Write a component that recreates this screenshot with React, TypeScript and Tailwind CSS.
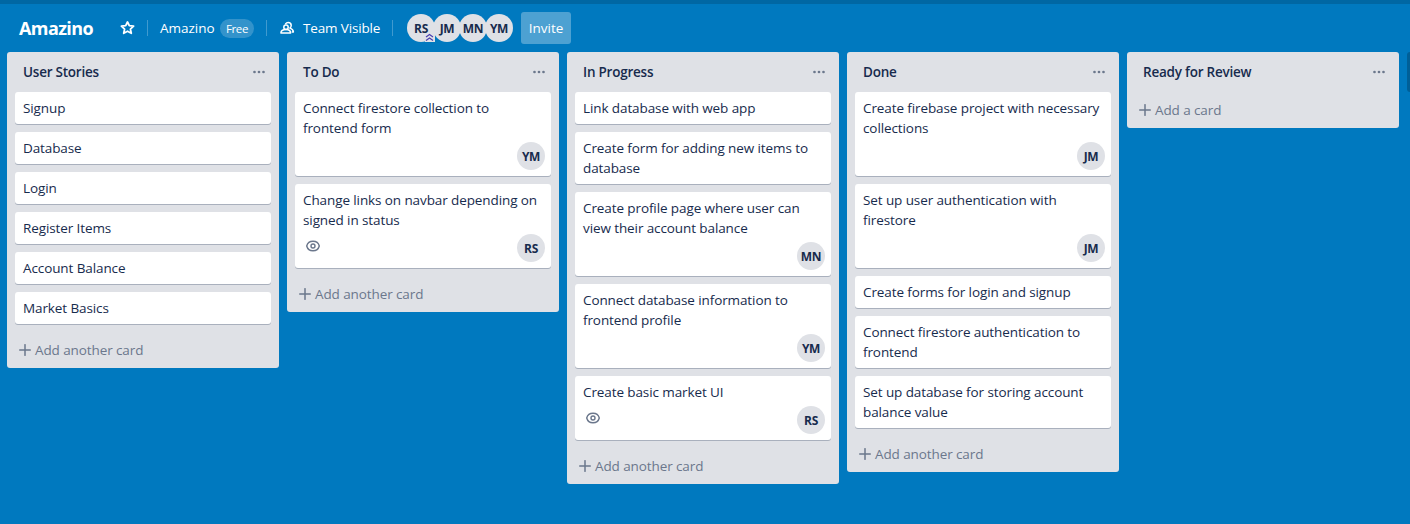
import React from 'react';

type Card = { title: string; member?: string; watched?: boolean };
type List = { title: string; cards: Card[] };

const lists: List[] = [
  {
    title: 'User Stories',
    cards: [
      { title: 'Signup' },
      { title: 'Database' },
      { title: 'Login' },
      { title: 'Register Items' },
      { title: 'Account Balance' },
      { title: 'Market Basics' },
    ],
  },
  {
    title: 'To Do',
    cards: [
      { title: 'Connect firestore collection to\nfrontend form', member: 'YM' },
      { title: 'Change links on navbar depending on\nsigned in status', member: 'RS', watched: true },
    ],
  },
  {
    title: 'In Progress',
    cards: [
      { title: 'Link database with web app' },
      { title: 'Create form for adding new items to\ndatabase' },
      { title: 'Create profile page where user can\nview their account balance', member: 'MN' },
      { title: 'Connect database information to\nfrontend profile', member: 'YM' },
      { title: 'Create basic market UI', member: 'RS', watched: true },
    ],
  },
  {
    title: 'Done',
    cards: [
      { title: 'Create firebase project with necessary\ncollections', member: 'JM' },
      { title: 'Set up user authentication with\nfirestore', member: 'JM' },
      { title: 'Create forms for login and signup' },
      { title: 'Connect firestore authentication to\nfrontend' },
      { title: 'Set up database for storing account\nbalance value' },
    ],
  },
  { title: 'Ready for Review', cards: [] },
];

function Avatar({ name }: { name: string }) {
  return (
    <span className="flex size-7 shrink-0 items-center justify-center rounded-full bg-[#dfe1e6] pt-px text-[12px] font-bold tracking-[-0.3px] text-[#172b4d]">
      {name}
    </span>
  );
}

function Divider() {
  return <span className="h-4 w-px shrink-0 bg-white/25" />;
}

function StarIcon() {
  return (
    <svg width="16" height="16" viewBox="0 0 16 16" fill="none" stroke="white" strokeWidth="1.8" strokeLinejoin="round">
      <path d="M8.500 2L10.300 5.700L14.600 6.200L11.400 9.100L12.300 13.300L8.500 11.200L4.700 13.300L5.600 9.100L2.400 6.200L6.700 5.700Z" />
    </svg>
  );
}

function TeamIcon() {
  return (
    <svg width="16" height="16" viewBox="0 0 16 16" fill="none" stroke="white" strokeWidth="1.5" strokeLinejoin="round" strokeLinecap="round">
      <circle cx="7" cy="7.200" r="2.200" />
      <path d="M1.900 13C2 10.900 4 9.500 7 9.500S11.500 10.900 11.600 13Z" />
      <path d="M6.600 3.800C7.200 2.900 8.100 2.500 9.100 2.500C11 2.500 12.200 4 12.200 5.500C12.200 6.700 11.600 7.600 10.900 8.100C13 8.700 14.300 9.800 14.400 12H13.300" />
    </svg>
  );
}

function EyeIcon() {
  return (
    <svg width="16" height="16" viewBox="0 0 16 16" fill="none" stroke="#6b778c" strokeWidth="1.4">
      <path d="M1.700 8C2.500 5 5.100 3.300 8 3.300S13.500 5 14.300 8C13.500 11 10.900 12.700 8 12.700S2.500 11 1.700 8z" />
      <circle cx="8" cy="8" r="2" />
    </svg>
  );
}

function CardView({ card }: { card: Card }) {
  return (
    <div className="mb-2 rounded-[3px] bg-white px-2 py-1.5 shadow-[0_1px_0_rgba(9,30,66,0.25)]">
      <p className="whitespace-pre text-[13.5px] leading-5 tracking-[-0.1px]">{card.title}</p>
      {card.member && (
        <div className="-mr-0.5 mt-1 flex h-7 justify-between">
          <span className="pl-0.5 pt-1">{card.watched && <EyeIcon />}</span>
          <Avatar name={card.member} />
        </div>
      )}
    </div>
  );
}

function ListView({ list }: { list: List }) {
  return (
    <section className="w-[272px] shrink-0 rounded-[3px] bg-[#dfe1e6] px-2">
      <div className="flex h-10 items-center justify-between pl-2 pr-1.5">
        <h2 className="text-[13.5px] font-semibold leading-5 tracking-[-0.23px]">{list.title}</h2>
        <svg width="12" height="4" viewBox="0 0 12 4" fill="#6b778c">
          <circle cx="1.500" cy="2" r="1.350" />
          <circle cx="6" cy="2" r="1.350" />
          <circle cx="10.500" cy="2" r="1.350" />
        </svg>
      </div>
      {list.cards.map((card) => (
        <CardView key={card.title} card={card} />
      ))}
      <div className="flex h-9 items-center gap-1 pl-1 text-[13.5px] leading-5 tracking-[-0.1px] text-[#6b778c]">
        <svg width="12" height="12" viewBox="0 0 12 12" stroke="#6b778c" strokeWidth="1.500" strokeLinecap="round">
          <path d="M6 .7v10.600M.7 6h10.600" />
        </svg>
        <span>{list.cards.length ? 'Add another card' : 'Add a card'}</span>
      </div>
    </section>
  );
}

export default function App() {
  return (
    <div className="h-[524px] w-[1410px] overflow-hidden bg-[#0079bf] font-['Open_Sans','Noto_Sans',sans-serif] text-[#172b4d]">
      <div className="h-1 bg-[#0067a3]" />
      <header className="flex h-12 items-center text-[13.5px] leading-5 text-white">
        <h1 className="ml-[19px] w-[100px] text-[18px] font-bold tracking-[-0.6px]">Amazino</h1>
        <StarIcon />
        <span className="ml-3 flex">
          <Divider />
        </span>
        <span className="ml-[12px] w-[60px]">Amazino</span>
        <span className="flex h-[19px] w-[34px] items-center justify-center rounded-full bg-white/20 pt-px text-[11.5px] font-medium tracking-[-0.4px]">Free</span>
        <span className="ml-3 flex">
          <Divider />
        </span>
        <span className="ml-[12px] flex">
          <TeamIcon />
        </span>
        <span className="ml-2 w-[81px] whitespace-nowrap tracking-[-0.15px]">Team Visible</span>
        <span className="ml-2 flex">
          <Divider />
        </span>
        <div className="ml-[14px] flex -space-x-0.5">
          <div className="relative">
            <Avatar name="RS" />
            <svg className="absolute bottom-0 right-0" width="10" height="9" viewBox="0 0 10 9" fill="none" stroke="#4a3fb0" strokeWidth="1.200">
              <path fill="#dfe1e6" stroke="none" d="M0 0h10v9H0z" />
              <path d="M1 4l3.500-2.500L8 4M1 7.500l3.500-2.500L8 7.500" />
            </svg>
          </div>
          <Avatar name="JM" />
          <Avatar name="MN" />
          <Avatar name="YM" />
        </div>
        <button className="ml-2 h-8 w-[50px] rounded-[3px] bg-white/30">Invite</button>
      </header>
      <main className="flex items-start gap-2 pl-[7px]">
        {lists.map((list) => (
          <ListView key={list.title} list={list} />
        ))}
        <div className="h-10 w-[272px] shrink-0 rounded-[3px] bg-[#005f97]" />
      </main>
    </div>
  );
}
